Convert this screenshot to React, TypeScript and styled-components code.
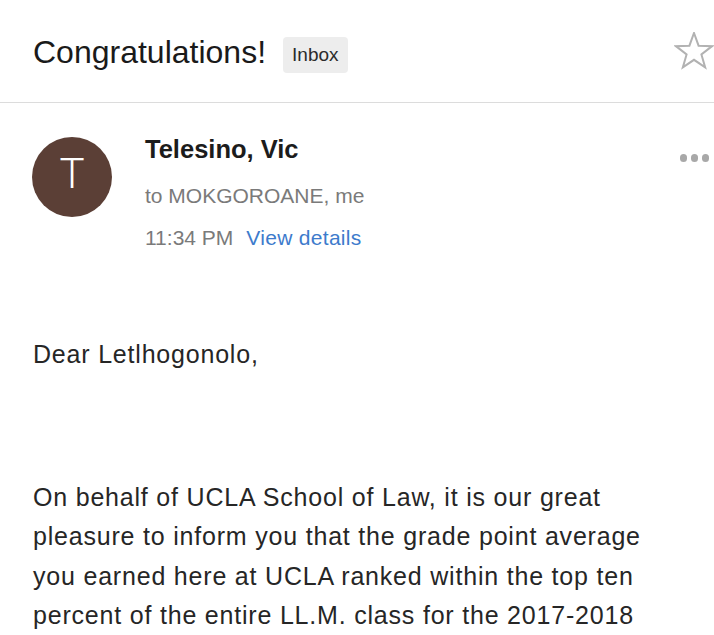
import React from "react";
import styled, { createGlobalStyle } from "styled-components";

const GlobalStyle = createGlobalStyle`
  html, body {
    margin: 0;
    padding: 0;
    background: #ffffff;
  }
  body {
    font-family: "Liberation Sans", Arial, Helvetica, sans-serif;
    -webkit-font-smoothing: antialiased;
  }
`;

const Page = styled.div`
  width: 714px;
  height: 635px;
  overflow: hidden;
  background: #ffffff;
`;

const Header = styled.header`
  box-sizing: border-box;
  height: 103px;
  display: flex;
  align-items: flex-start;
  padding: 32px 0 0 33px;
  border-bottom: 1px solid #dcdcdc;
`;

const Subject = styled.h1`
  margin: 0;
  font-size: 32px;
  line-height: 40px;
  font-weight: 400;
  color: #1a1a1a;
`;

const Label = styled.span`
  box-sizing: border-box;
  margin: 5px 0 0 17px;
  height: 36px;
  padding: 0 9px;
  display: inline-flex;
  align-items: center;
  border-radius: 4px;
  background: #ededed;
  font-size: 19px;
  color: #2b2b2b;
`;

const StarButton = styled.button`
  margin-left: auto;
  padding: 0;
  border: 0;
  background: none;
  width: 40px;
  height: 38px;
  display: flex;
  line-height: 0;
`;

const SenderRow = styled.section`
  display: flex;
  align-items: flex-start;
  padding: 31px 5px 0 32px;
`;

const Avatar = styled.div<{ $bg: string }>`
  flex: none;
  margin-top: 3px;
  width: 80px;
  height: 80px;
  border-radius: 50%;
  background: ${(p) => p.$bg};
  color: #ffffff;
  display: flex;
  align-items: center;
  justify-content: center;
  font-family: Roboto, "Liberation Sans", sans-serif;
  font-weight: 300;
  font-size: 42px;
  line-height: 1;
  padding-bottom: 6px;
  box-sizing: border-box;
`;

const SenderInfo = styled.div`
  margin-left: 33px;
  display: flex;
  flex-direction: column;
`;

const SenderName = styled.div`
  font-size: 25.5px;
  line-height: 30px;
  font-weight: 700;
  color: #1c1c1c;
  margin-bottom: 11px;
`;

const MetaLine = styled.div`
  font-size: 21px;
  line-height: 42px;
  color: #7a7a7a;
  display: flex;
  gap: 13px;
`;

const DetailsLink = styled.a`
  color: #3d7bcc;
  text-decoration: none;
  letter-spacing: 0.3px;
`;

const MoreDots = styled.div`
  margin-left: auto;
  margin-top: 20px;
  display: flex;
  gap: 3.5px;
`;

const Dot = styled.span`
  width: 7.5px;
  height: 7.5px;
  border-radius: 50%;
  background: #a8a8a8;
`;

const MessageBody = styled.article`
  padding: 76px 50px 0 33px;
  font-size: 25px;
  line-height: 39.5px;
  color: #262626;
  letter-spacing: 0.8px;
`;

const Paragraph = styled.p<{ $gapAfter?: number }>`
  margin: 0 0 ${(p) => p.$gapAfter ?? 0}px 0;
`;

// Five-pointed star outline, points alternating outer/inner radius
const starPoints = Array.from({ length: 10 }, (_, i) => {
  const r = i % 2 === 0 ? 19 : 7.8;
  const a = -Math.PI / 2 + (i * Math.PI) / 5;
  return `${(20 + r * Math.cos(a)).toFixed(2)},${(20 + r * Math.sin(a)).toFixed(2)}`;
}).join(" ");

const StarIcon = () => (
  <svg width="40" height="38" viewBox="0 0 40 38" aria-hidden="true">
    <polygon
      points={starPoints}
      fill="none"
      stroke="#b2b2b2"
      strokeWidth="2"
      strokeLinejoin="miter"
    />
  </svg>
);

export default function App() {
  return (
    <Page>
      <GlobalStyle />
      <Header>
        <Subject>Congratulations!</Subject>
        <Label>Inbox</Label>
        <StarButton aria-label="Star">
          <StarIcon />
        </StarButton>
      </Header>

      <SenderRow>
        <Avatar $bg="#5b3f36">T</Avatar>
        <SenderInfo>
          <SenderName>Telesino, Vic</SenderName>
          <MetaLine>to MOKGOROANE, me</MetaLine>
          <MetaLine>
            <span>11:34 PM</span>
            <DetailsLink href="#">View details</DetailsLink>
          </MetaLine>
        </SenderInfo>
        <MoreDots aria-label="More">
          <Dot />
          <Dot />
          <Dot />
        </MoreDots>
      </SenderRow>

      <MessageBody>
        <Paragraph $gapAfter={103}>Dear Letlhogonolo,</Paragraph>
        <Paragraph>
          On behalf of UCLA School of Law, it is our great pleasure to inform
          you that the grade point average you earned here at UCLA ranked
          within the top ten percent of the entire LL.M. class for the
          2017-2018 academic year.
        </Paragraph>
      </MessageBody>
    </Page>
  );
}
